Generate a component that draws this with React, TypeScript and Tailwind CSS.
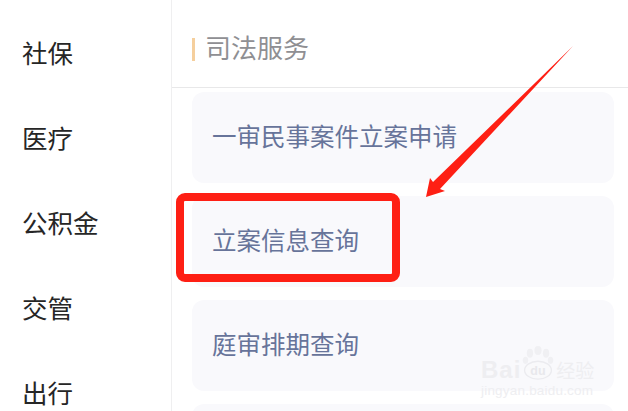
const cjk = "font-['Noto_Sans_CJK_SC','Noto_Sans',sans-serif]";

const navItems = ["社保", "医疗", "公积金", "交管", "出行"];
const services = ["一审民事案件立案申请", "立案信息查询", "庭审排期查询", ""];

const Watermark = () => (
  <div className="absolute left-[481px] top-[342px] w-[120px] text-[#eeeef1]">
    <div className="flex items-end h-[42px]">
      <span className="font-['Liberation_Sans',sans-serif] text-[24px] leading-[28px] font-bold tracking-[1px]">Bai</span>
      <svg width="34" height="42" viewBox="0 0 38 42" fill="#f0f0f3" className="shrink-0">
        <ellipse cx="19" cy="7" rx="4" ry="5" />
        <ellipse cx="10" cy="10" rx="3.5" ry="5" />
        <ellipse cx="28" cy="10" rx="3.5" ry="5" />
        <ellipse cx="5" cy="18" rx="3" ry="4" />
        <ellipse cx="33" cy="18" rx="3" ry="4" />
        <ellipse cx="19" cy="29" rx="15" ry="10" fill="#f9f9fb" stroke="#ebebef" strokeWidth="1.5" />
        <text x="19" y="34" textAnchor="middle" fontSize="14" fontWeight="700" fontFamily="Liberation Sans" fill="#e8e8ec">du</text>
      </svg>
      <span className={`${cjk} text-[19px] leading-[28px] ml-[1px]`}>经验</span>
    </div>
    <div className="font-['Liberation_Sans',sans-serif] text-[13.5px] leading-[14px] tracking-[0.2px] whitespace-nowrap">jingyan.baidu.com</div>
  </div>
);

export default function App() {
  return (
    <div className={`${cjk} relative flex w-[628px] h-[411px] overflow-hidden bg-white`}>
      <aside className="w-[172px] shrink-0 border-r border-[#efeff0] pt-[10px] pl-[22px]">
        {navItems.map((item) => (
          <div key={item} className="h-[85px] flex items-center text-[25.5px] text-[#262626]">
            {item}
          </div>
        ))}
      </aside>
      <main className="flex-1 min-w-0">
        <div className="h-[88px] border-b border-[#e8e8e9] flex items-center pl-[20px] pt-[11px]">
          <span className="w-[3px] h-[23px] bg-[#f5cf9d] mr-[10px]" />
          <span className="text-[26px] text-[#8f8f93] mb-[6px]">司法服务</span>
        </div>
        <div className="flex flex-col gap-[13px] pt-[4px] pl-[20px] pr-[14px]">
          {services.map((name, i) => (
            <div
              key={i}
              className="h-[91px] shrink-0 rounded-[12px] bg-[#f9f9fc] flex items-center pl-[20px] pb-[2px] text-[24.5px] text-[#67749a]"
            >
              {name}
            </div>
          ))}
        </div>
      </main>
      <div className="absolute left-[176px] top-[193px] w-[224px] h-[89px] border-[8px] border-[#fe1f14] rounded-[9px]" />
      <svg className="absolute inset-0" width="628" height="411" viewBox="0 0 628 411">
        <polygon points="573,46 440,189 445,191 426,197 430,178 433,182" fill="#fe1f14" />
      </svg>
      <Watermark />
    </div>
  );
}
